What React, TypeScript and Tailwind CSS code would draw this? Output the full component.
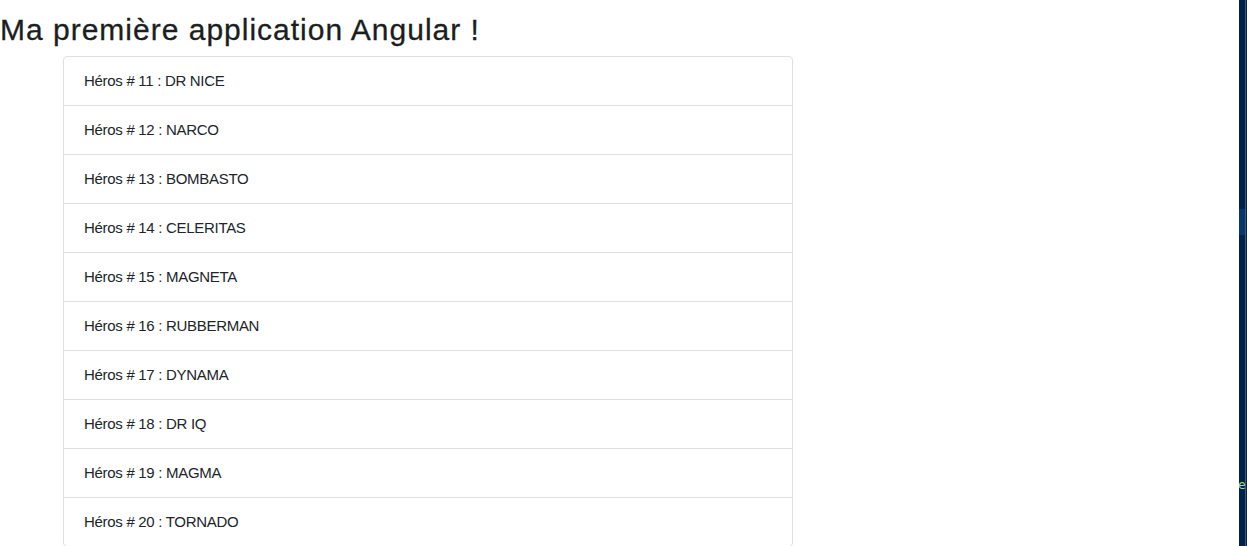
const heroes = [
	{ id: 11, name: "DR NICE" },
	{ id: 12, name: "NARCO" },
	{ id: 13, name: "BOMBASTO" },
	{ id: 14, name: "CELERITAS" },
	{ id: 15, name: "MAGNETA" },
	{ id: 16, name: "RUBBERMAN" },
	{ id: 17, name: "DYNAMA" },
	{ id: 18, name: "DR IQ" },
	{ id: 19, name: "MAGMA" },
	{ id: 20, name: "TORNADO" },
];

const App: React.FC = () => {
	return (
		<div className="flex h-[546px] overflow-hidden bg-white font-['Liberation_Sans',Arial,sans-serif] text-[#212529]">
			<main className="flex-1 min-w-0">
				<h2 className="mt-[12px] mb-[8px] text-[30px] leading-[36px] tracking-[1px] whitespace-nowrap text-[#1b1e21] [-webkit-text-stroke:0.3px_#1b1e21]">
					Ma première application Angular !
				</h2>
				<ul className="ml-[63px] w-[730px] border border-[#dfdfdf] rounded">
					{heroes.map((hero, i) => (
						<li
							key={hero.id}
							className={
								"px-5 pt-[12px] pb-[12px] text-[15px] leading-6 tracking-[-0.3px] " +
								(i < heroes.length - 1 ? "border-b border-[#dfdfdf]" : "")
							}
						>
							Héros # {hero.id} : {hero.name}
						</li>
					))}
				</ul>
			</main>
			{/* bout de fenêtre d'éditeur à droite */}
			<aside className="flex w-[8px] shrink-0 bg-[#01234b]">
				<div className="flex flex-col w-[6px] overflow-hidden">
					<div className="h-[209px]" />
					<div className="h-[26px] bg-[#06386b]" />
					<div className="h-[242px]" />
					<div className="text-[13px] leading-[16px] text-[#a9d48c] font-['DejaVu_Sans_Mono',monospace] -ml-[1px]">
						e
					</div>
				</div>
				<div className="w-[1px] bg-[#3b5b7d]" />
				<div className="w-[1px]" />
			</aside>
		</div>
	);
};

export default App;
